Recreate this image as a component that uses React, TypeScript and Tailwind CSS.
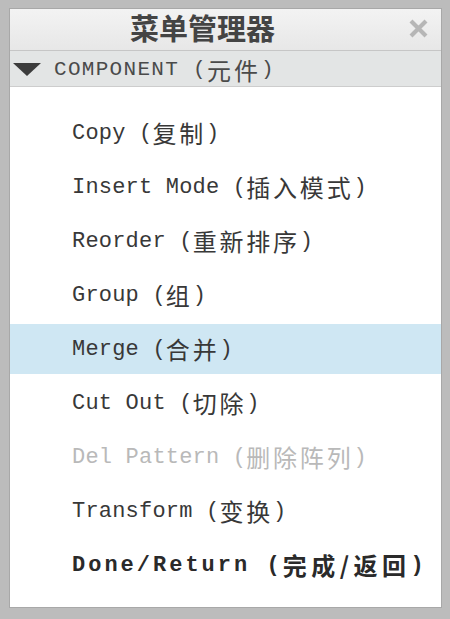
const mono = { fontFamily: '"Liberation Mono", "DejaVu Sans Mono", monospace' };

type Item = { en: string; zh: string; state?: "active" | "disabled" | "bold" };

const items: Item[] = [
  { en: "Copy", zh: "复制" },
  { en: "Insert Mode", zh: "插入模式" },
  { en: "Reorder", zh: "重新排序" },
  { en: "Group", zh: "组" },
  { en: "Merge", zh: "合并", state: "active" },
  { en: "Cut Out", zh: "切除" },
  { en: "Del Pattern", zh: "删除阵列", state: "disabled" },
  { en: "Transform", zh: "变换" },
  { en: "Done/Return", zh: "完成/返回", state: "bold" },
];

function Label({ en, zh, bold }: { en: string; zh: string; bold?: boolean }) {
  return (
    <span className="flex items-center whitespace-pre">
      <span className={`text-[22px] ${bold ? "font-bold tracking-[3px]" : "tracking-[0.2px]"}`} style={mono}>
        {en + " ("}
      </span>
      <span
        className={`font-['Noto_Sans_CJK_SC',sans-serif] text-[24px] ${bold ? "font-bold tracking-[4.5px]" : "tracking-[2.8px]"}`}
      >
        {zh}
      </span>
      <span className={`text-[22px] ${bold ? "font-bold" : ""}`} style={mono}>
        )
      </span>
    </span>
  );
}

export default function App() {
  return (
    <div className="w-[450px] h-[619px] bg-[#bcbcbc] pt-[8px] pl-[9px] pr-[8px] pb-[11px]">
      <div className="h-full flex flex-col border border-[#a8a8a8]">
        <div className="h-[42px] flex items-center bg-gradient-to-b from-[#f3f3f3] to-[#e7e7e7] border-b border-[#c6c6c6]">
          <div className="flex-1 text-center font-['Noto_Sans_CJK_SC',sans-serif] font-bold text-[29px] leading-none text-[#444444] pb-[4px]">
            菜单管理器
          </div>
          <div className="w-[46px] flex justify-center pb-[3px]">
            <svg width="21" height="19" viewBox="0 0 21 19">
              <path d="M3 2 L18 17 M18 2 L3 17" stroke="#b6b6b6" strokeWidth="4.2" />
            </svg>
          </div>
        </div>
        <div className="h-[36px] flex items-center bg-[#e3e5e5] border-b border-[#cdcdcd] pl-[3px] pt-[2px]">
          <svg width="28" height="13" viewBox="0 0 28 13">
            <polygon points="0,0 28,0 14,13" fill="#3c3c3c" />
          </svg>
          <span className="ml-[13px] flex items-center whitespace-pre text-[#4a4a4a]">
            <span className="text-[21px] tracking-[1.3px]" style={mono}>
              {"COMPONENT ("}
            </span>
            <span className="font-['Noto_Sans_CJK_SC',sans-serif] text-[24px] tracking-[3px]">元件</span>
            <span className="text-[21px]" style={mono}>
              )
            </span>
          </span>
        </div>
        <div className="flex-1 bg-white pt-[21px] flex flex-col gap-[4px]">
          {items.map((it) => (
            <div
              key={it.en}
              className={`h-[50px] flex items-center pl-[62px] ${it.state === "active" ? "bg-[#cfe7f3]" : ""} ${
                it.state === "disabled" ? "text-[#b9b9b9]" : it.state === "bold" ? "text-[#2a2a2a]" : "text-[#383838]"
              }`}
            >
              <Label en={it.en} zh={it.zh} bold={it.state === "bold"} />
            </div>
          ))}
        </div>
      </div>
    </div>
  );
}
